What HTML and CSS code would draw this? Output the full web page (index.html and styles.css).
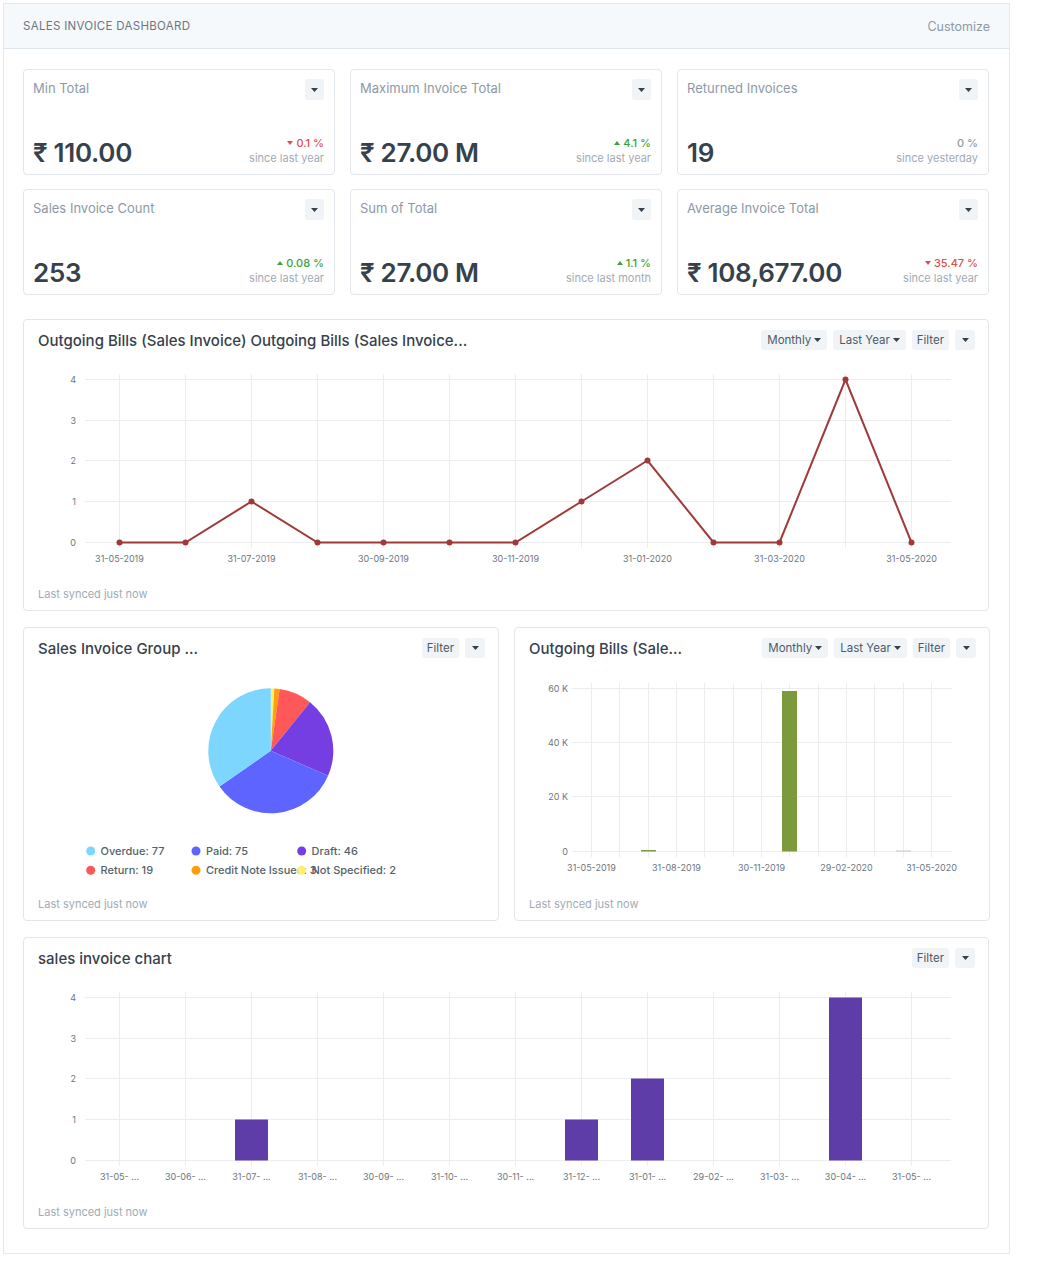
FILE: index.html
```html
<!DOCTYPE html>
<html>
<head>
<meta charset="utf-8">
<title>Sales Invoice Dashboard</title>
<link rel="stylesheet" href="styles.css">
</head>
<body>
<div class="page">
  <div class="page-head">
    <div class="page-title">Sales Invoice Dashboard</div>
    <div class="customize">Customize</div>
  </div>
  <div class="page-body">
    <div class="stats">
      <div class="stat">
        <div class="stat-head"><span class="stat-title">Min Total</span><span class="icon-btn"><svg width="7" height="4" viewBox="0 0 7 4"><path d="M0 0h7L3.5 4z"/></svg></span></div>
        <div class="stat-foot"><div class="stat-value">₹ 110.00</div><div class="stat-delta"><div class="pct down"><i class="tri-down"></i>0.1 %</div><div class="since">since last year</div></div></div>
      </div>
      <div class="stat">
        <div class="stat-head"><span class="stat-title">Maximum Invoice Total</span><span class="icon-btn"><svg width="7" height="4" viewBox="0 0 7 4"><path d="M0 0h7L3.5 4z"/></svg></span></div>
        <div class="stat-foot"><div class="stat-value">₹ 27.00 M</div><div class="stat-delta"><div class="pct up"><i class="tri-up"></i>4.1 %</div><div class="since">since last year</div></div></div>
      </div>
      <div class="stat">
        <div class="stat-head"><span class="stat-title">Returned Invoices</span><span class="icon-btn"><svg width="7" height="4" viewBox="0 0 7 4"><path d="M0 0h7L3.5 4z"/></svg></span></div>
        <div class="stat-foot"><div class="stat-value">19</div><div class="stat-delta"><div class="pct flat">0 %</div><div class="since">since yesterday</div></div></div>
      </div>
      <div class="stat">
        <div class="stat-head"><span class="stat-title">Sales Invoice Count</span><span class="icon-btn"><svg width="7" height="4" viewBox="0 0 7 4"><path d="M0 0h7L3.5 4z"/></svg></span></div>
        <div class="stat-foot"><div class="stat-value">253</div><div class="stat-delta"><div class="pct up"><i class="tri-up"></i>0.08 %</div><div class="since">since last year</div></div></div>
      </div>
      <div class="stat">
        <div class="stat-head"><span class="stat-title">Sum of Total</span><span class="icon-btn"><svg width="7" height="4" viewBox="0 0 7 4"><path d="M0 0h7L3.5 4z"/></svg></span></div>
        <div class="stat-foot"><div class="stat-value">₹ 27.00 M</div><div class="stat-delta"><div class="pct up"><i class="tri-up"></i>1.1 %</div><div class="since">since last month</div></div></div>
      </div>
      <div class="stat">
        <div class="stat-head"><span class="stat-title">Average Invoice Total</span><span class="icon-btn"><svg width="7" height="4" viewBox="0 0 7 4"><path d="M0 0h7L3.5 4z"/></svg></span></div>
        <div class="stat-foot"><div class="stat-value">₹ 108,677.00</div><div class="stat-delta"><div class="pct down"><i class="tri-down"></i>35.47 %</div><div class="since">since last year</div></div></div>
      </div>
    </div>

    <div class="card card-wide">
      <div class="card-head">
        <div class="card-title">Outgoing Bills (Sales Invoice) Outgoing Bills (Sales Invoice...</div>
        <div class="actions">
          <span class="btn">Monthly <svg width="7" height="4" viewBox="0 0 7 4"><path d="M0 0h7L3.5 4z"/></svg></span>
          <span class="btn">Last Year <svg width="7" height="4" viewBox="0 0 7 4"><path d="M0 0h7L3.5 4z"/></svg></span>
          <span class="btn filter">Filter</span>
          <span class="btn icon"><svg width="7" height="4" viewBox="0 0 7 4"><path d="M0 0h7L3.5 4z"/></svg></span>
        </div>
      </div>
      <svg class="chart" width="964" height="220" viewBox="0 0 964 220">
        <g class="grid">
          <line x1="61" y1="19.5" x2="927" y2="19.5"/>
          <line x1="61" y1="60.5" x2="927" y2="60.5"/>
          <line x1="61" y1="100.5" x2="927" y2="100.5"/>
          <line x1="61" y1="141.5" x2="927" y2="141.5"/>
          <line x1="61" y1="182.5" x2="927" y2="182.5"/>
          <line x1="95.5" y1="14" x2="95.5" y2="188"/>
          <line x1="161.5" y1="14" x2="161.5" y2="188"/>
          <line x1="227.5" y1="14" x2="227.5" y2="188"/>
          <line x1="293.5" y1="14" x2="293.5" y2="188"/>
          <line x1="359.5" y1="14" x2="359.5" y2="188"/>
          <line x1="425.5" y1="14" x2="425.5" y2="188"/>
          <line x1="491.5" y1="14" x2="491.5" y2="188"/>
          <line x1="557.5" y1="14" x2="557.5" y2="188"/>
          <line x1="623.5" y1="14" x2="623.5" y2="188"/>
          <line x1="689.5" y1="14" x2="689.5" y2="188"/>
          <line x1="755.5" y1="14" x2="755.5" y2="188"/>
          <line x1="821.5" y1="14" x2="821.5" y2="188"/>
          <line x1="887.5" y1="14" x2="887.5" y2="188"/>
        </g>
        <g class="ylab">
          <text x="52" y="22.5">4</text>
          <text x="52" y="63.5">3</text>
          <text x="52" y="103.5">2</text>
          <text x="52" y="144.5">1</text>
          <text x="52" y="185.5">0</text>
        </g>
        <polyline class="line" points="95.5,182.5 161.5,182.5 227.5,141.5 293.5,182.5 359.5,182.5 425.5,182.5 491.5,182.5 557.5,141.5 623.5,100.5 689.5,182.5 755.5,182.5 821.5,19.5 887.5,182.5"/>
        <g class="dots">
          <circle cx="95.5" cy="182.5" r="3"/>
          <circle cx="161.5" cy="182.5" r="3"/>
          <circle cx="227.5" cy="141.5" r="3"/>
          <circle cx="293.5" cy="182.5" r="3"/>
          <circle cx="359.5" cy="182.5" r="3"/>
          <circle cx="425.5" cy="182.5" r="3"/>
          <circle cx="491.5" cy="182.5" r="3"/>
          <circle cx="557.5" cy="141.5" r="3"/>
          <circle cx="623.5" cy="100.5" r="3"/>
          <circle cx="689.5" cy="182.5" r="3"/>
          <circle cx="755.5" cy="182.5" r="3"/>
          <circle cx="821.5" cy="19.5" r="3"/>
          <circle cx="887.5" cy="182.5" r="3"/>
        </g>
        <g class="xlab">
          <text x="95.5" y="201.5">31-05-2019</text>
          <text x="227.5" y="201.5">31-07-2019</text>
          <text x="359.5" y="201.5">30-09-2019</text>
          <text x="491.5" y="201.5">30-11-2019</text>
          <text x="623.5" y="201.5">31-01-2020</text>
          <text x="755.5" y="201.5">31-03-2020</text>
          <text x="887.5" y="201.5">31-05-2020</text>
        </g>
      </svg>
      <div class="card-foot">Last synced just now</div>
    </div>

    <div class="row-2">
      <div class="card">
        <div class="card-head">
          <div class="card-title">Sales Invoice Group ...</div>
          <div class="actions">
            <span class="btn filter">Filter</span>
            <span class="btn icon"><svg width="7" height="4" viewBox="0 0 7 4"><path d="M0 0h7L3.5 4z"/></svg></span>
          </div>
        </div>
        <svg class="chart" width="474" height="222" viewBox="0 0 474 222">
          <g transform="translate(246.8 82.8)">
            <path fill="#feef72" d="M0 0L0 -62.5A62.5 62.5 0 0 1 3.53 -62.4Z"/>
            <path fill="#ffa00a" d="M0 0L3.53 -62.4A62.5 62.5 0 0 1 8.82 -61.87Z"/>
            <path fill="#ff5858" d="M0 0L8.82 -61.87A62.5 62.5 0 0 1 39.27 -48.62Z"/>
            <path fill="#743ee2" d="M0 0L39.27 -48.62A62.5 62.5 0 0 1 57.31 24.94Z"/>
            <path fill="#5e64ff" d="M0 0L57.31 24.94A62.5 62.5 0 0 1 -51.28 35.73Z"/>
            <path fill="#7cd6fd" d="M0 0L-51.28 35.73A62.5 62.5 0 0 1 0 -62.5Z"/>
          </g>
          <g class="legend">
            <circle cx="66.7" cy="183" r="4.5" fill="#7cd6fd"/>
            <text x="76.5" y="187">Overdue: 77</text>
            <circle cx="172" cy="183" r="4.5" fill="#5e64ff"/>
            <text x="182" y="187">Paid: 75</text>
            <circle cx="277.7" cy="183" r="4.5" fill="#743ee2"/>
            <text x="287.5" y="187">Draft: 46</text>
            <circle cx="66.7" cy="202.3" r="4.5" fill="#ff5858"/>
            <text x="76.5" y="206.3">Return: 19</text>
            <circle cx="172" cy="202.3" r="4.5" fill="#ffa00a"/>
            <text x="182" y="206.3">Credit Note Issued: 3</text>
            <circle cx="277.7" cy="202.3" r="4.5" fill="#feef72"/>
            <text x="287.5" y="206.3">Not Specified: 2</text>
          </g>
        </svg>
        <div class="card-foot">Last synced just now</div>
      </div>

      <div class="card">
        <div class="card-head">
          <div class="card-title">Outgoing Bills (Sale...</div>
          <div class="actions">
            <span class="btn">Monthly <svg width="7" height="4" viewBox="0 0 7 4"><path d="M0 0h7L3.5 4z"/></svg></span>
            <span class="btn">Last Year <svg width="7" height="4" viewBox="0 0 7 4"><path d="M0 0h7L3.5 4z"/></svg></span>
            <span class="btn filter">Filter</span>
            <span class="btn icon"><svg width="7" height="4" viewBox="0 0 7 4"><path d="M0 0h7L3.5 4z"/></svg></span>
          </div>
        </div>
        <svg class="chart" width="474" height="222" viewBox="0 0 474 222">
          <g class="grid">
            <line x1="57" y1="20.5" x2="437" y2="20.5"/>
            <line x1="57" y1="74.5" x2="437" y2="74.5"/>
            <line x1="57" y1="128.5" x2="437" y2="128.5"/>
            <line x1="57" y1="183.5" x2="437" y2="183.5"/>
            <line x1="76.5" y1="15" x2="76.5" y2="189"/>
            <line x1="104.5" y1="15" x2="104.5" y2="189"/>
            <line x1="133.5" y1="15" x2="133.5" y2="189"/>
            <line x1="161.5" y1="15" x2="161.5" y2="189"/>
            <line x1="189.5" y1="15" x2="189.5" y2="189"/>
            <line x1="218.5" y1="15" x2="218.5" y2="189"/>
            <line x1="246.5" y1="15" x2="246.5" y2="189"/>
            <line x1="274.5" y1="15" x2="274.5" y2="189"/>
            <line x1="303.5" y1="15" x2="303.5" y2="189"/>
            <line x1="331.5" y1="15" x2="331.5" y2="189"/>
            <line x1="359.5" y1="15" x2="359.5" y2="189"/>
            <line x1="388.5" y1="15" x2="388.5" y2="189"/>
            <line x1="416.5" y1="15" x2="416.5" y2="189"/>
          </g>
          <g class="ylab">
            <text x="53" y="23.5">60 K</text>
            <text x="53" y="77.5">40 K</text>
            <text x="53" y="131.5">20 K</text>
            <text x="53" y="186.5">0</text>
          </g>
          <rect x="126" y="182" width="15" height="1.5" fill="#7a9a3d"/>
          <rect x="381" y="182.5" width="15" height="1" fill="#c8c8c8"/>
          <rect x="267" y="23" width="15" height="160.5" fill="#7a9a3d"/>
          <g class="xlab">
            <text x="76.5" y="202.5">31-05-2019</text>
            <text x="161.5" y="202.5">31-08-2019</text>
            <text x="246.5" y="202.5">30-11-2019</text>
            <text x="331.5" y="202.5">29-02-2020</text>
            <text x="416.5" y="202.5">31-05-2020</text>
          </g>
        </svg>
        <div class="card-foot">Last synced just now</div>
      </div>
    </div>

    <div class="card card-wide card-last">
      <div class="card-head">
        <div class="card-title">sales invoice chart</div>
        <div class="actions">
          <span class="btn filter">Filter</span>
          <span class="btn icon"><svg width="7" height="4" viewBox="0 0 7 4"><path d="M0 0h7L3.5 4z"/></svg></span>
        </div>
      </div>
      <svg class="chart" width="964" height="220" viewBox="0 0 964 220">
        <g class="grid">
          <line x1="61" y1="19.5" x2="927" y2="19.5"/>
          <line x1="61" y1="60.5" x2="927" y2="60.5"/>
          <line x1="61" y1="100.5" x2="927" y2="100.5"/>
          <line x1="61" y1="141.5" x2="927" y2="141.5"/>
          <line x1="61" y1="182.5" x2="927" y2="182.5"/>
          <line x1="95.5" y1="14" x2="95.5" y2="188"/>
          <line x1="161.5" y1="14" x2="161.5" y2="188"/>
          <line x1="227.5" y1="14" x2="227.5" y2="188"/>
          <line x1="293.5" y1="14" x2="293.5" y2="188"/>
          <line x1="359.5" y1="14" x2="359.5" y2="188"/>
          <line x1="425.5" y1="14" x2="425.5" y2="188"/>
          <line x1="491.5" y1="14" x2="491.5" y2="188"/>
          <line x1="557.5" y1="14" x2="557.5" y2="188"/>
          <line x1="623.5" y1="14" x2="623.5" y2="188"/>
          <line x1="689.5" y1="14" x2="689.5" y2="188"/>
          <line x1="755.5" y1="14" x2="755.5" y2="188"/>
          <line x1="821.5" y1="14" x2="821.5" y2="188"/>
          <line x1="887.5" y1="14" x2="887.5" y2="188"/>
        </g>
        <g class="ylab">
          <text x="52" y="22.5">4</text>
          <text x="52" y="63.5">3</text>
          <text x="52" y="103.5">2</text>
          <text x="52" y="144.5">1</text>
          <text x="52" y="185.5">0</text>
        </g>
        <g class="bars">
          <rect x="211" y="141.5" width="33" height="41"/>
          <rect x="541" y="141.5" width="33" height="41"/>
          <rect x="607" y="100.5" width="33" height="82"/>
          <rect x="805" y="19.5" width="33" height="163"/>
        </g>
        <g class="xlab">
          <text x="95.5" y="201.5">31-05- ...</text>
          <text x="161.5" y="201.5">30-06- ...</text>
          <text x="227.5" y="201.5">31-07- ...</text>
          <text x="293.5" y="201.5">31-08- ...</text>
          <text x="359.5" y="201.5">30-09- ...</text>
          <text x="425.5" y="201.5">31-10- ...</text>
          <text x="491.5" y="201.5">30-11- ...</text>
          <text x="557.5" y="201.5">31-12- ...</text>
          <text x="623.5" y="201.5">31-01- ...</text>
          <text x="689.5" y="201.5">29-02- ...</text>
          <text x="755.5" y="201.5">31-03- ...</text>
          <text x="821.5" y="201.5">30-04- ...</text>
          <text x="887.5" y="201.5">31-05- ...</text>
        </g>
      </svg>
      <div class="card-foot">Last synced just now</div>
    </div>
  </div>
</div>
</body>
</html>
```

FILE: styles.css
```css
* { box-sizing: border-box; }

body {
  margin: 0;
  background: #ffffff;
  font-family: Inter, "Noto Sans", "DejaVu Sans", sans-serif;
  color: #36414c;
}

.page {
  margin: 3px 0 0 3px;
  width: 1007px;
  border: 1px solid #e6e9ec;
}

.page-head {
  height: 45px;
  background: #f5f9fc;
  border-bottom: 1px solid #dfe7ec;
  display: flex;
  align-items: center;
  justify-content: space-between;
  padding: 0 19px 0 19px;
}

.page-title {
  font-size: 11.5px;
  text-transform: uppercase;
  letter-spacing: 0.3px;
  color: #6c7680;
}

.customize {
  font-size: 12.5px;
  color: #8d99a6;
}

.page-body {
  padding: 20px 20px 24px 19px;
}

.stats {
  display: grid;
  grid-template-columns: repeat(3, 1fr);
  gap: 14px 15px;
}

.stat {
  height: 106px;
  border: 1px solid #e2e6ea;
  border-radius: 4px;
  padding: 9px 10px 8px 9px;
  display: flex;
  flex-direction: column;
}

.stat-head {
  display: flex;
  justify-content: space-between;
  align-items: flex-start;
}

.stat-title {
  font-size: 13px;
  line-height: 19px;
  color: #8d99a6;
}

.icon-btn {
  width: 19px;
  height: 21px;
  background: #f0f4f7;
  border-radius: 3px;
  display: flex;
  align-items: center;
  justify-content: center;
}

.icon-btn svg path,
.btn svg path { fill: #36414c; }

.stat-foot {
  margin-top: auto;
  display: flex;
  justify-content: space-between;
  align-items: flex-end;
}

.stat-value {
  font-size: 26px;
  line-height: 26px;
  font-weight: 600;
  letter-spacing: -0.3px;
  color: #36414c;
}

.stat-delta {
  text-align: right;
  font-size: 11px;
  line-height: 15px;
}

.pct { font-weight: 500; }
.pct.down { color: #e24c4c; }
.pct.up { color: #3aa33a; }
.pct.flat { color: #8d99a6; }

.since { color: #a1abb5; }

.tri-down, .tri-up {
  display: inline-block;
  width: 0;
  height: 0;
  border-left: 3px solid transparent;
  border-right: 3px solid transparent;
  margin-right: 3px;
  vertical-align: 2px;
}
.tri-down { border-top: 4px solid #e24c4c; }
.tri-up { border-bottom: 4px solid #3aa33a; }

.card {
  border: 1px solid #e2e6ea;
  border-radius: 4px;
  background: #fff;
}

.card-wide { margin-top: 24px; }

.card-head {
  height: 40px;
  display: flex;
  align-items: center;
  justify-content: space-between;
  padding: 0 13px 0 14px;
}

.card-title {
  font-size: 15px;
  font-weight: 500;
  color: #36414c;
  white-space: nowrap;
}

.actions {
  display: flex;
  gap: 6px;
}

.btn {
  height: 20px;
  padding: 0 6px;
  background: #f0f4f7;
  border-radius: 3px;
  font-size: 11.5px;
  color: #4c5a67;
  display: flex;
  align-items: center;
  gap: 3px;
}

.btn.filter { padding: 0 5px; }

.btn.icon {
  width: 20px;
  padding: 0;
  justify-content: center;
}

.chart { display: block; }

.chart .grid line {
  stroke: #ebedef;
  stroke-width: 1;
}

.chart text {
  font-family: Inter, "Noto Sans", "DejaVu Sans", sans-serif;
  font-size: 9px;
  fill: #6c7680;
}

.chart .ylab text { text-anchor: end; }
.chart .xlab text { text-anchor: middle; }

.chart .line {
  fill: none;
  stroke: #a03a3a;
  stroke-width: 2;
}

.chart .dots circle { fill: #a03a3a; }

.chart .bars rect { fill: #5f3da8; }

.chart .legend text {
  font-size: 11px;
  font-weight: 500;
  fill: #555f69;
}

.card-foot {
  padding: 6px 14px 8px;
  font-size: 11px;
  line-height: 16px;
  color: #a1abb5;
}

.row-2 {
  margin-top: 16px;
  display: grid;
  grid-template-columns: 1fr 1fr;
  gap: 15px;
}

.card-last { margin-top: 16px; }
```
